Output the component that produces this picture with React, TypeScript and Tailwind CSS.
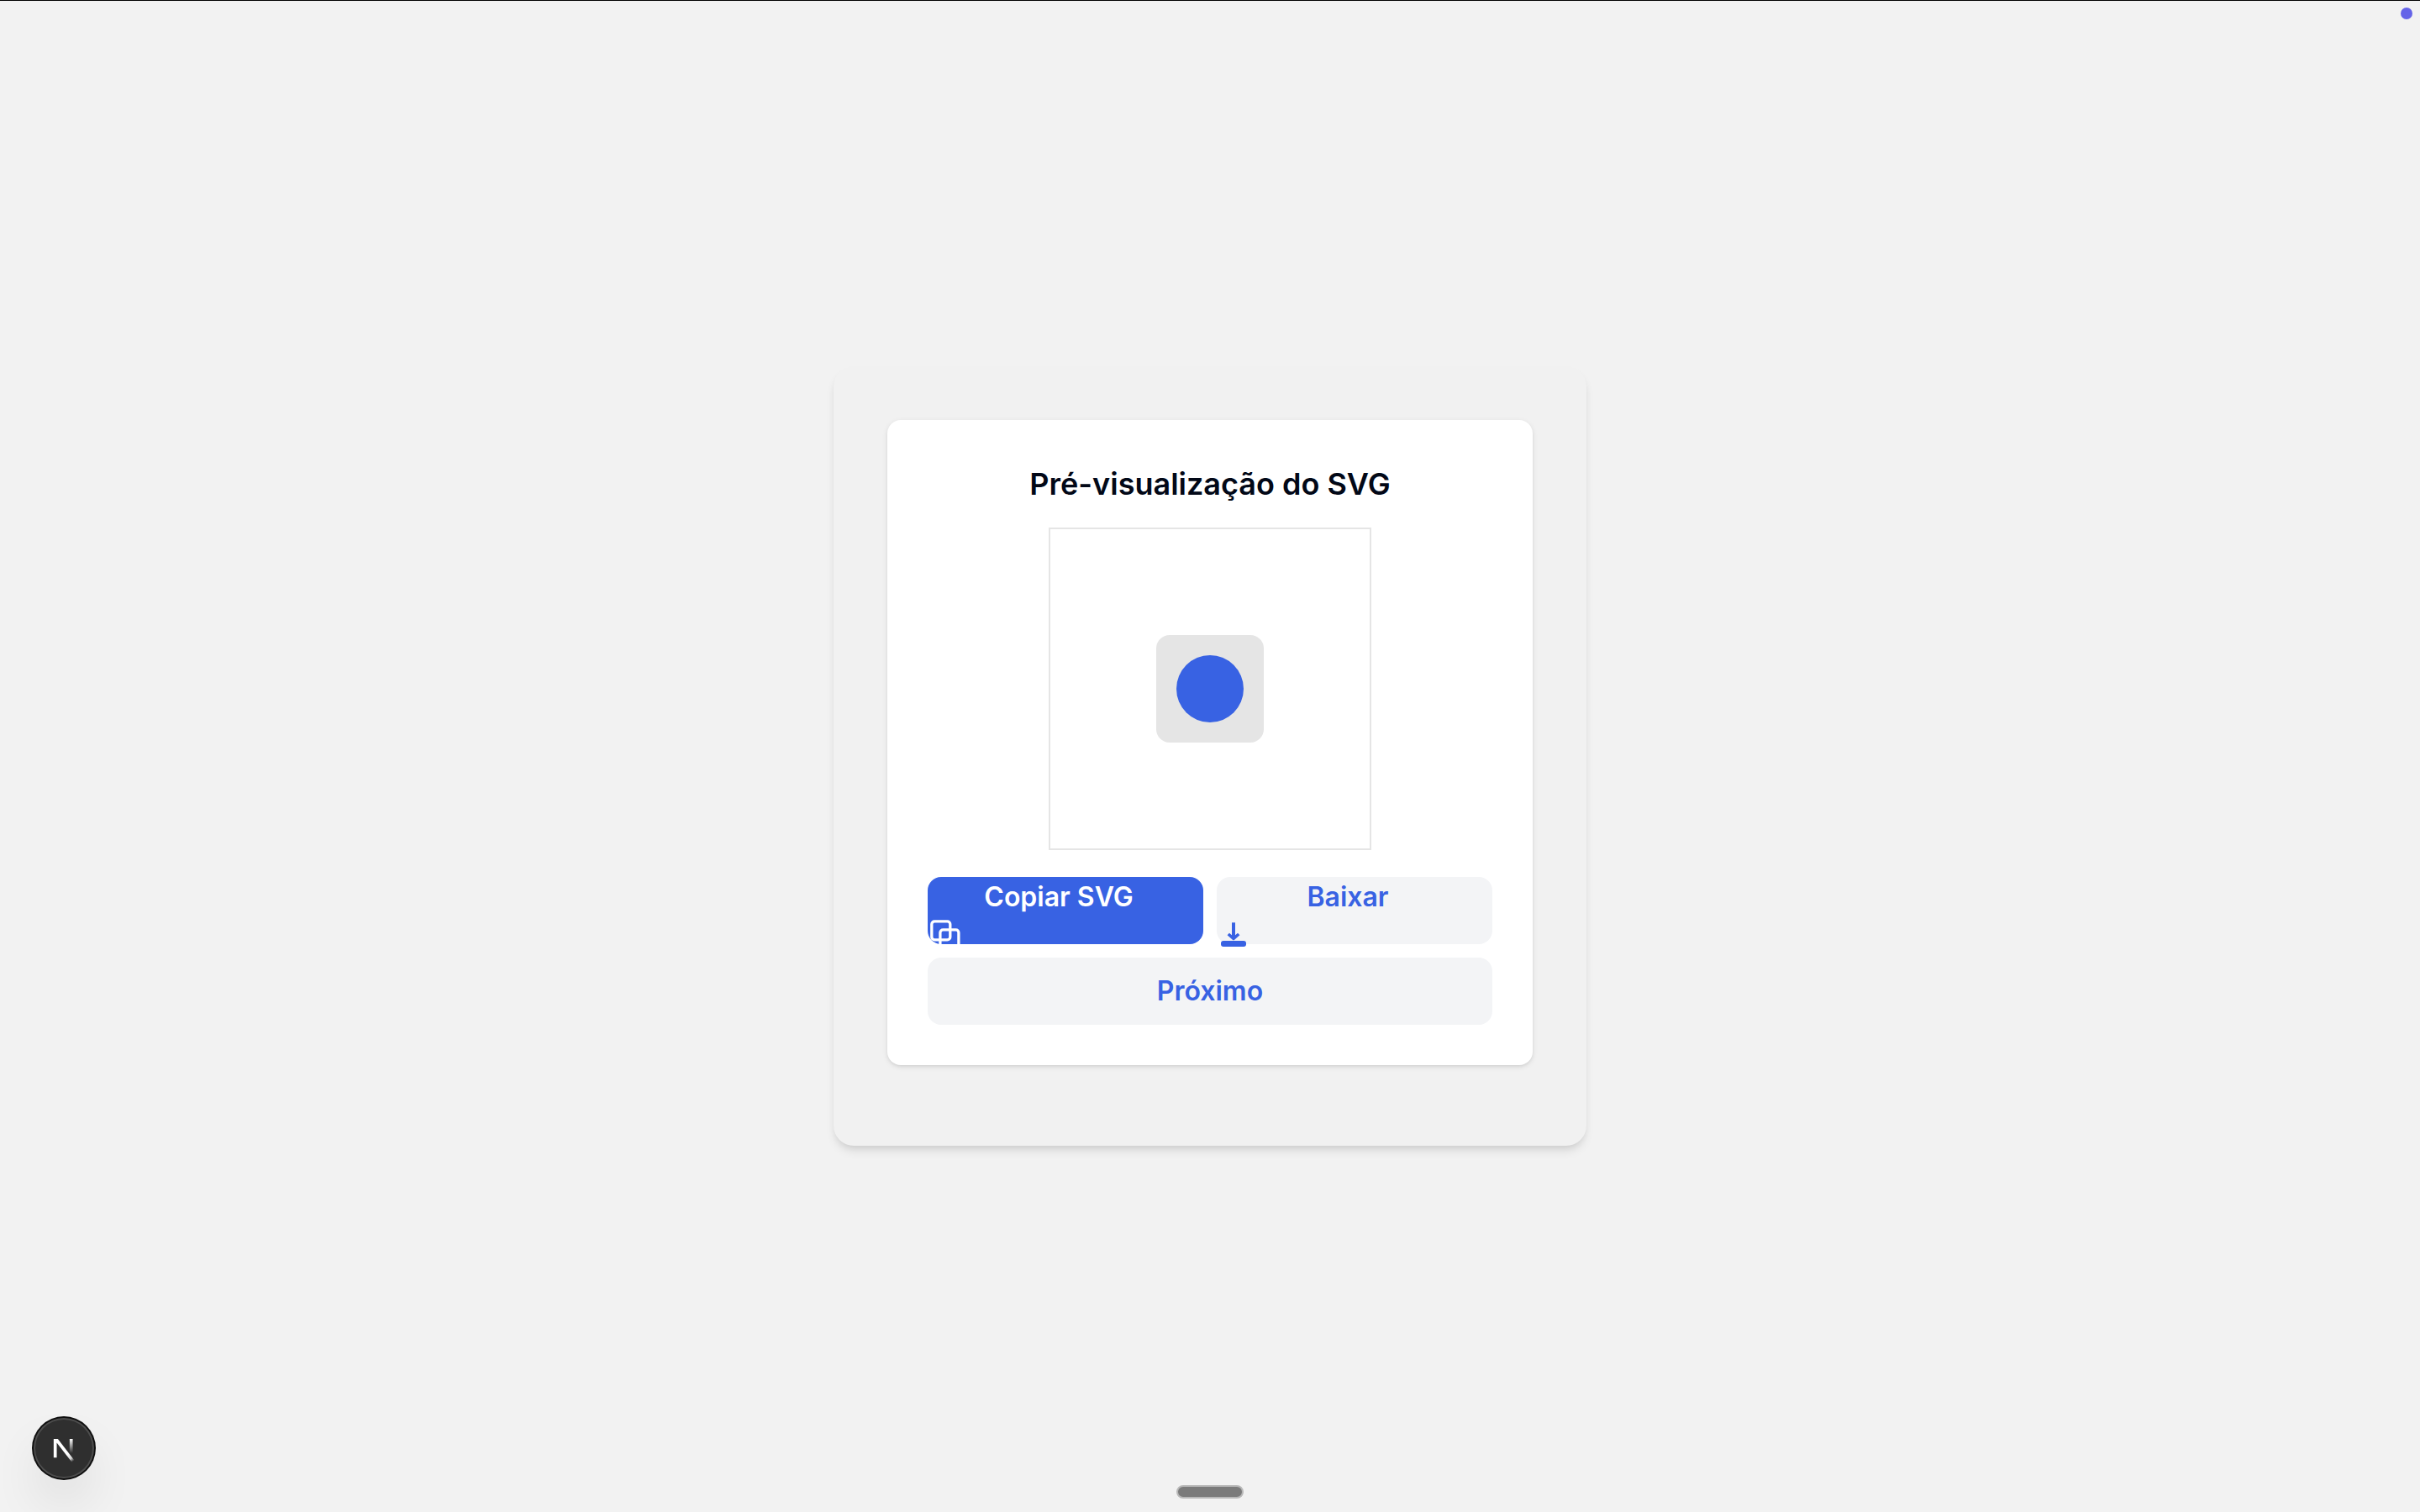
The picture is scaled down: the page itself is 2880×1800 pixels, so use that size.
import React from "react";

function CopyIcon() {
  return (
    <svg className="block size-10 shrink-0" viewBox="0 0 40 40" fill="none" stroke="currentColor" strokeWidth="3.3" aria-hidden="true">
      <rect x="4.8" y="4.8" width="22" height="22" rx="3.4" />
      <rect x="14.9" y="14.9" width="22" height="22" rx="3.4" />
    </svg>
  );
}

function DownloadIcon() {
  return (
    <svg className="block size-10 shrink-0" viewBox="0 0 40 40" fill="none" stroke="currentColor" aria-hidden="true">
      <path d="M20 6.3V25" strokeWidth="4" />
      <path d="M13.8 20L20 25.4L26.2 20" strokeWidth="3.6" strokeLinejoin="round" />
      <rect x="5" y="28" width="30" height="7" rx="3" fill="currentColor" stroke="none" />
    </svg>
  );
}

function NextMark() {
  return (
    <svg className="block size-[72px]" viewBox="0 0 72 72" fill="none" aria-hidden="true">
      <defs>
        <linearGradient id="diag" gradientUnits="userSpaceOnUse" x1="40.5" y1="43.3" x2="47" y2="51.6">
          <stop stopColor="white" />
          <stop offset="0.6" stopColor="white" stopOpacity="0.8" />
          <stop offset="1" stopColor="white" stopOpacity="0" />
        </linearGradient>
        <linearGradient id="stem" gradientUnits="userSpaceOnUse" x1="44.6" y1="25" x2="44.6" y2="42">
          <stop stopColor="white" />
          <stop offset="1" stopColor="white" stopOpacity="0" />
        </linearGradient>
        <clipPath id="mark">
          <rect x="20" y="25" width="32" height="30" />
        </clipPath>
      </defs>
      <g clipPath="url(#mark)" strokeWidth="3.7">
        <path d="M47.6 52.4L25.7 24V47.2" stroke="url(#diag)" />
        <path d="M44.7 25V48" stroke="url(#stem)" />
      </g>
    </svg>
  );
}

export default function App() {
  return (
    <div className="relative flex min-h-screen items-center justify-center bg-[#f2f2f2] font-['Inter',sans-serif] text-[#020817]">
      <div className="absolute inset-x-0 top-0 h-px bg-black" />
      <div className="absolute right-[9px] top-[9px] size-3.5 rounded-full bg-[#6463e8]" />

      <main className="w-full max-w-4xl rounded-3xl bg-[#f1f1f1] px-16 pt-16 pb-24 shadow-[0_8px_12px_-2px_rgba(0,0,0,0.1),0_4px_8px_-4px_rgba(0,0,0,0.1)]">
        <section className="flex flex-col items-center rounded-2xl bg-white p-12 shadow-[0_2px_6px_0_rgba(0,0,0,0.1),0_2px_4px_-2px_rgba(0,0,0,0.1)]">
          <h2 className="mb-6 text-4xl leading-14 font-semibold">Pré-visualização do SVG</h2>
          <div className="mb-8 flex size-96 items-center justify-center border-2 border-[#e5e5e5]">
            <svg className="size-32" viewBox="0 0 128 128" role="img" aria-label="SVG">
              <rect width="128" height="128" rx="16" fill="#e5e5e5" />
              <circle cx="64" cy="64" r="40" fill="#3862e3" />
            </svg>
          </div>
          <div className="grid w-full grid-cols-2 gap-4 text-[32px] leading-12 font-semibold">
            <button type="button" className="flex h-20 flex-col rounded-2xl bg-[#3862e3] text-white">
              <span className="w-full pr-4 text-center">Copiar SVG</span>
              <CopyIcon />
            </button>
            <button type="button" className="flex h-20 flex-col rounded-2xl bg-[#f3f4f6] text-[#3862e3]">
              <span className="w-full pr-4 text-center">Baixar</span>
              <DownloadIcon />
            </button>
            <button type="button" className="col-span-2 h-20 rounded-2xl bg-[#f3f4f6] text-[#3862e3]">
              Próximo
            </button>
          </div>
        </section>
      </main>

      <button
        type="button"
        aria-label="Next.js"
        className="absolute bottom-10 left-10 size-[72px] rounded-full bg-[#2f2f2f] shadow-[0_0_0_2px_#0f0f0f,inset_0_0_0_2px_rgba(255,255,255,0.14),0_32px_64px_-16px_rgba(0,0,0,0.24)]"
      >
        <NextMark />
      </button>
      <div className="absolute bottom-4 left-1/2 h-4 w-20 -translate-x-1/2 rounded-full border-2 border-[#b9b9b9] bg-[#7b7b7b]" />
    </div>
  );
}
